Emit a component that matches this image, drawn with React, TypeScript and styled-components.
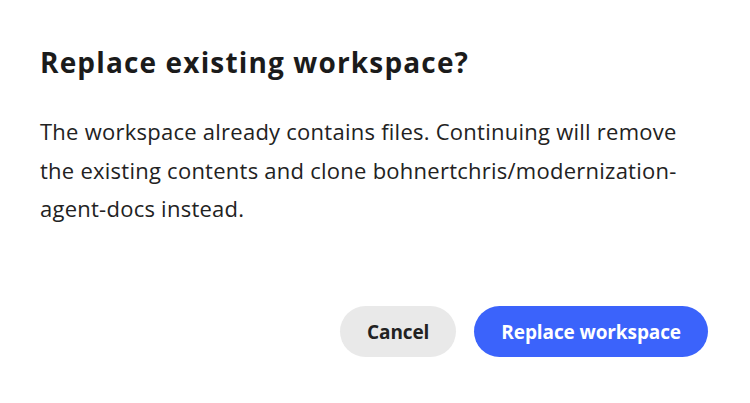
import styled, { createGlobalStyle } from "styled-components";

const GlobalStyle = createGlobalStyle`
  html, body {
    margin: 0;
    padding: 0;
    background: #ffffff;
  }
  body {
    font-family: "Open Sans", "Noto Sans", sans-serif;
    -webkit-font-smoothing: antialiased;
  }
`;

const Dialog = styled.section`
  width: 750px;
  height: 403px;
  box-sizing: border-box;
  padding: 44px 42px 46px 40px;
  display: flex;
  flex-direction: column;
  background: #ffffff;
`;

const Title = styled.h2`
  margin: 0;
  font-size: 28px;
  line-height: 36px;
  font-weight: 700;
  color: #1b1b1b;
  letter-spacing: 1.15px;
  white-space: nowrap;
`;

const Body = styled.p`
  margin: 32px 0 0;
  font-size: 22px;
  line-height: 38.5px;
  font-weight: 400;
  color: #222222;
  letter-spacing: 0.25px;
  white-space: nowrap;
`;

const Footer = styled.div`
  margin-top: auto;
  display: flex;
  justify-content: flex-end;
  gap: 18px;
`;

const Button = styled.button<{ $primary?: boolean }>`
  height: 51px;
  padding: 0 27px;
  border: none;
  border-radius: 26px;
  font-family: inherit;
  font-size: 19px;
  font-weight: 700;
  cursor: pointer;
  background: ${(p) => (p.$primary ? "#3b63fb" : "#e9e9e9")};
  color: ${(p) => (p.$primary ? "#ffffff" : "#222222")};
  letter-spacing: -0.1px;
`;

function App() {
  return (
    <>
      <GlobalStyle />
      <Dialog>
        <Title>Replace existing workspace?</Title>
        <Body>
          The workspace already contains files. Continuing will remove
          <br />
          the existing contents and clone bohnertchris/modernization-
          <br />
          agent-docs instead.
        </Body>
        <Footer>
          <Button>Cancel</Button>
          <Button $primary>Replace workspace</Button>
        </Footer>
      </Dialog>
    </>
  );
}

export default App;
